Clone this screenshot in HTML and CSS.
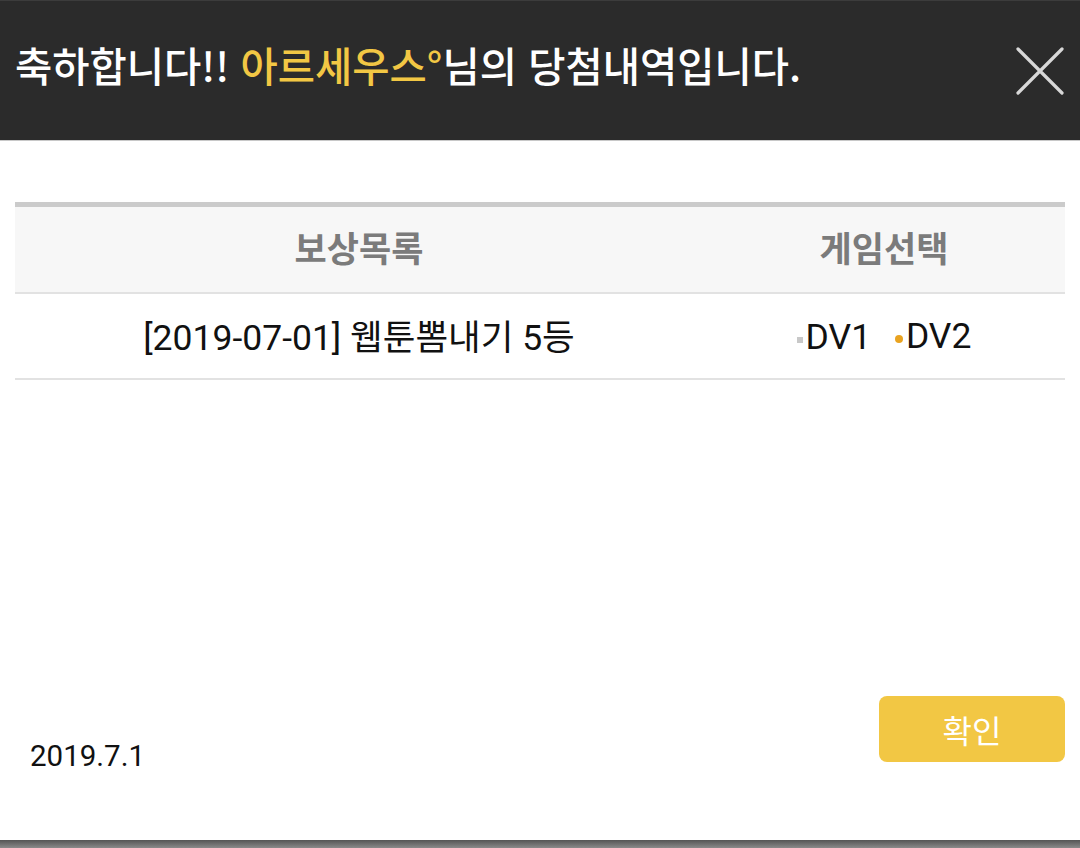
FILE: index.html
```html
<!DOCTYPE html>
<html lang="ko">
<head>
<meta charset="utf-8">
<link rel="stylesheet" href="styles.css">
</head>
<body>
<div class="popup">
  <header class="topbar">
    <h1 class="title">축하합니다!! <span class="nick">아르세우스°</span>님의 당첨내역입니다.</h1>
    <button class="close" aria-label="닫기">
      <svg width="50" height="50" viewBox="0 0 50 50">
        <path d="M3 3 L47 47 M47 3 L3 47" stroke="#d8d8d8" stroke-width="3.2" stroke-linecap="round" fill="none"/>
      </svg>
    </button>
  </header>
  <main class="content">
    <div class="table">
      <div class="row head">
        <div class="cell c1">보상목록</div>
        <div class="cell c2">게임선택</div>
      </div>
      <div class="row body">
        <div class="cell c1">[2019-07-01] 웹툰뽐내기 5등</div>
        <div class="cell c2">
          <span class="opt"><span class="dot sq"></span>DV1</span>
          <span class="opt"><span class="dot ci"></span>DV2</span>
        </div>
      </div>
    </div>
  </main>
  <footer class="foot">
    <div class="date">2019.7.1</div>
    <button class="ok">확인</button>
  </footer>
  <div class="bottombar"></div>
</div>
</body>
</html>
```
FILE: styles.css
```css
html, body {
  margin: 0;
  padding: 0;
  background: #fff;
}
body {
  font-family: Roboto, "Noto Sans CJK KR", sans-serif;
}
.popup {
  width: 1080px;
  height: 848px;
  display: flex;
  flex-direction: column;
}
.topbar {
  background: #2b2b2b;
  border-top: 1px solid #3c3c3c;
  border-bottom: 1px solid #c8c8c8;
  box-sizing: border-box;
  height: 141px;
  display: flex;
  align-items: center;
  justify-content: space-between;
  padding: 0 15px 0 15px;
}
.title {
  margin: 0;
  font-family: "Noto Sans CJK KR", sans-serif;
  font-weight: 500;
  font-size: 40.5px;
  color: #fff;
  margin-top: -12px;
}
.nick {
  color: #f2c744;
}
.close {
  background: none;
  border: 0;
  padding: 0;
  width: 50px;
  height: 50px;
  margin-top: 0;
  display: block;
}
.close svg {
  display: block;
}
.content {
  flex: 1;
  padding: 61px 15px 0 15px;
}
.table {
  border-top: 5px solid #cbcbcb;
}
.row {
  display: flex;
  align-items: center;
}
.row.head {
  height: 85px;
  background: #f7f7f7;
  border-bottom: 2px solid #e2e2e2;
}
.row.body {
  height: 84px;
  border-bottom: 2px solid #e2e2e2;
}
.cell {
  text-align: center;
}
.c1 {
  width: 688px;
}
.c2 {
  flex: 1;
}
.head .cell {
  font-family: "Noto Sans CJK KR", sans-serif;
  font-weight: 700;
  font-size: 35px;
  color: #7b7b7b;
  margin-top: -6px;
}
.body .cell {
  font-size: 35.5px;
  color: #111;
  margin-top: -4px;
}
.opt {
  display: inline-flex;
  align-items: center;
}
.opt + .opt {
  margin-left: 15px;
}
.dot {
  display: inline-block;
  width: 6px;
  height: 6px;
  margin-right: 3px;
  margin-top: 5px;
}
.dot.sq {
  background: #c8c8c8;
}
.dot.ci {
  background: #e9a320;
  border-radius: 50%;
  width: 8px;
  height: 8px;
}
.foot {
  display: flex;
  justify-content: space-between;
  align-items: flex-end;
  padding: 0 15px 78px 30px;
}
.date {
  font-size: 29.5px;
  line-height: 34px;
  color: #111;
  margin-bottom: -11px;
}
.ok {
  width: 186px;
  height: 66px;
  background: #f2c744;
  border: 0;
  border-radius: 8px;
  color: #fff;
  font-family: "Noto Sans CJK KR", sans-serif;
  font-size: 32px;
  padding: 0;
}
.bottombar {
  height: 8px;
  background: linear-gradient(#555, #8a8a8a);
}
```
